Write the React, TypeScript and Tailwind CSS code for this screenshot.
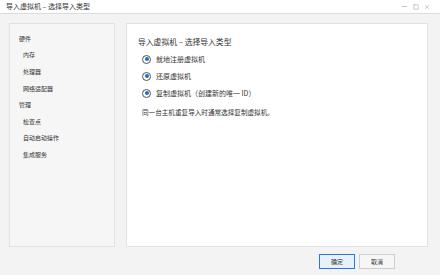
import { Minus, Square, X } from 'lucide-react';

const font = { fontFamily: '"Noto Sans CJK SC", "Noto Sans", sans-serif' };

const navItems = [
  { label: '硬件', indent: false },
  { label: '内存', indent: true },
  { label: '处理器', indent: true },
  { label: '网络适配器', indent: true },
  { label: '管理', indent: false },
  { label: '检查点', indent: true },
  { label: '自动启动操作', indent: true },
  { label: '集成服务', indent: true },
];

const options = ['就地注册虚拟机', '还原虚拟机', '复制虚拟机（创建新的唯一 ID）'];

function Radio({ label }: { label: string }) {
  return (
    <div className="flex h-[17px] items-center gap-[5px]">
      <span className="flex h-[9px] w-[9px] items-center justify-center rounded-full border border-[#555]">
        <span className="h-[4px] w-[4px] rounded-full bg-[#1a6fd6]" />
      </span>
      <span className="text-[7px] text-[#333]">{label}</span>
    </div>
  );
}

export default function App() {
  return (
    <div className="flex h-[275px] w-[440px] flex-col bg-[#f3f3f3]" style={font}>
      <div className="flex h-[14px] items-center justify-between border-b border-[#dcdcdc] bg-white pl-[6px] pr-[10px]">
        <span className="text-[7px] text-[#333]">导入虚拟机 – 选择导入类型</span>
        <div className="flex items-center gap-[5px] text-[#777]">
          <Minus size={7} strokeWidth={1.5} />
          <Square size={6} strokeWidth={1.5} />
          <X size={6} strokeWidth={1.5} />
        </div>
      </div>

      <div className="flex gap-[11px] pl-[9px] pr-[12px] pt-[9px]">
        <div className="flex h-[224px] w-[106px] flex-col border border-[#e2e2e2] bg-[#f6f6f6] pl-[9px] pt-[6px]">
          {navItems.map((item) => (
            <div
              key={item.label}
              className={`flex h-[16.6px] items-center text-[6px] text-[#333] ${item.indent ? 'pl-[4px]' : ''}`}
            >
              {item.label}
            </div>
          ))}
        </div>

        <div className="flex h-[224px] flex-1 flex-col border border-[#e2e2e2] bg-white pl-[11px] pt-[12px]">
          <div className="text-[7.8px] leading-[12px] text-[#333]">导入虚拟机 – 选择导入类型</div>
          <div className="mt-[2.5px] flex flex-col pl-[4px]">
            {options.map((o) => (
              <Radio key={o} label={o} />
            ))}
          </div>
          <div className="mt-[5px] pl-[4px] text-[6.6px] leading-[10px] text-[#333]">
            同一台主机重复导入时通常选择复制虚拟机。
          </div>
        </div>
      </div>

      <div className="flex justify-end gap-[4px] pr-[45px] pt-[7px]">
        <button className="h-[15px] w-[36px] border border-[#2a78d2] bg-[#e5f1fb] text-[6px] text-[#333]">
          确定
        </button>
        <button className="h-[15px] w-[36px] border border-[#cfcfcf] bg-[#f6f6f6] text-[6px] text-[#333]">
          取消
        </button>
      </div>
    </div>
  );
}
